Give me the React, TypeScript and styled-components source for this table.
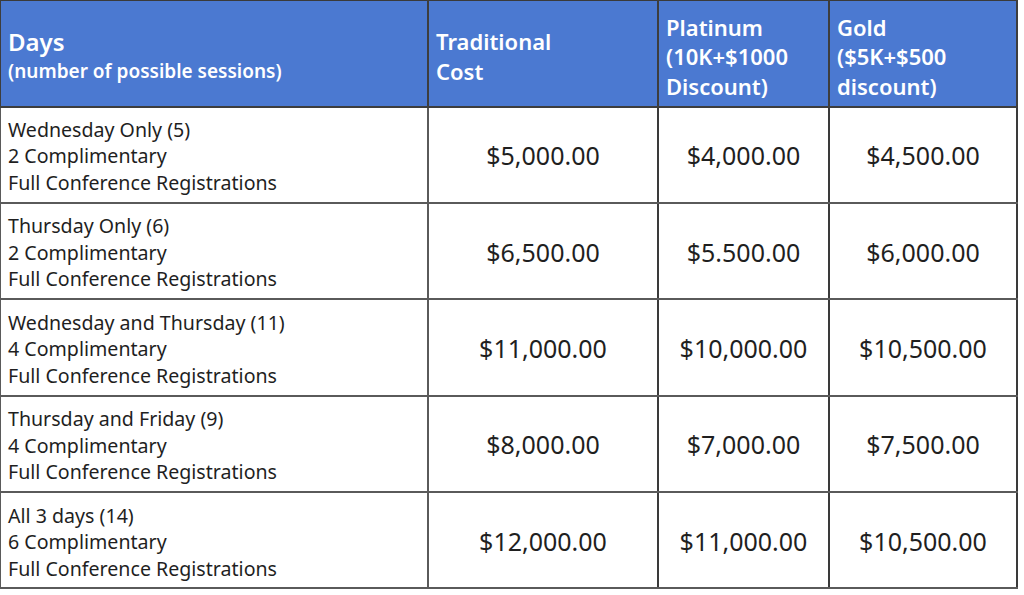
import * as React from "react"
import styled, { createGlobalStyle } from "styled-components"

const GlobalStyle = createGlobalStyle`
  html, body {
    margin: 0;
    padding: 0;
    background: #ffffff;
  }
  body {
    font-family: "Noto Sans", "Liberation Sans", sans-serif;
    color: #1f1f1f;
  }
`

const Page = styled.div`
  width: 1024px;
  height: 595px;
  overflow: hidden;
  background: #ffffff;
`

const Table = styled.table`
  border-collapse: collapse;
  table-layout: fixed;
  width: 1017px;
  margin-left: -1px;
`

const HeadCell = styled.th`
  background: #4b79d1;
  color: #ffffff;
  text-align: left;
  vertical-align: middle;
  font-weight: 600;
  font-size: 22px;
  line-height: 29.5px;
  padding: 7px 7px 0 7px;
  height: 106px;
  box-sizing: border-box;
  border: 2px solid #3d3d3d;
  border-top: 1px solid #3a3a3a;
`

const HeadMain = styled.span`
  display: block;
  font-size: 24px;
  line-height: 28px;
`

const HeadSub = styled.span`
  display: block;
  font-size: 19px;
  line-height: 30px;
`

const LabelCell = styled.td`
  font-size: 19.6px;
  line-height: 26.5px;
  padding: 4px 7px 0 7px;
  height: 96.4px;
  box-sizing: border-box;
  border: 2px solid #5a5a5a;
  vertical-align: middle;
  white-space: nowrap;
`

const PriceCell = styled.td`
  font-size: 25px;
  text-align: center;
  vertical-align: middle;
  padding-top: 2px;
  height: 96.4px;
  box-sizing: border-box;
  border: 2px solid #5a5a5a;
  border-left-color: #3a3a3a;
  border-right-color: #3a3a3a;
`

const Line = styled.div``

type Row = {
  days: string
  comp: string
  prices: [string, string, string]
}

const rows: Row[] = [
  { days: "Wednesday Only (5)", comp: "2 Complimentary", prices: ["$5,000.00", "$4,000.00", "$4,500.00"] },
  { days: "Thursday Only (6)", comp: "2 Complimentary", prices: ["$6,500.00", "$5.500.00", "$6,000.00"] },
  { days: "Wednesday and Thursday (11)", comp: "4 Complimentary", prices: ["$11,000.00", "$10,000.00", "$10,500.00"] },
  { days: "Thursday and Friday (9)", comp: "4 Complimentary", prices: ["$8,000.00", "$7,000.00", "$7,500.00"] },
  { days: "All 3 days (14)", comp: "6 Complimentary", prices: ["$12,000.00", "$11,000.00", "$10,500.00"] },
]

export default function App() {
  return (
    <Page>
      <GlobalStyle />
      <Table>
        <colgroup>
          <col style={{ width: 428 }} />
          <col style={{ width: 230 }} />
          <col style={{ width: 171 }} />
          <col style={{ width: 188 }} />
        </colgroup>
        <thead>
          <tr>
            <HeadCell>
              <HeadMain>Days</HeadMain>
              <HeadSub>(number of possible sessions)</HeadSub>
            </HeadCell>
            <HeadCell>
              Traditional
              <br />
              Cost
            </HeadCell>
            <HeadCell>
              Platinum
              <br />
              (10K+$1000
              <br />
              Discount)
            </HeadCell>
            <HeadCell>
              Gold
              <br />
              ($5K+$500
              <br />
              discount)
            </HeadCell>
          </tr>
        </thead>
        <tbody>
          {rows.map(r => (
            <tr key={r.days}>
              <LabelCell>
                <Line>{r.days}</Line>
                <Line>{r.comp}</Line>
                <Line>Full Conference Registrations</Line>
              </LabelCell>
              {r.prices.map((p, i) => (
                <PriceCell key={i}>{p}</PriceCell>
              ))}
            </tr>
          ))}
        </tbody>
      </Table>
    </Page>
  )
}
